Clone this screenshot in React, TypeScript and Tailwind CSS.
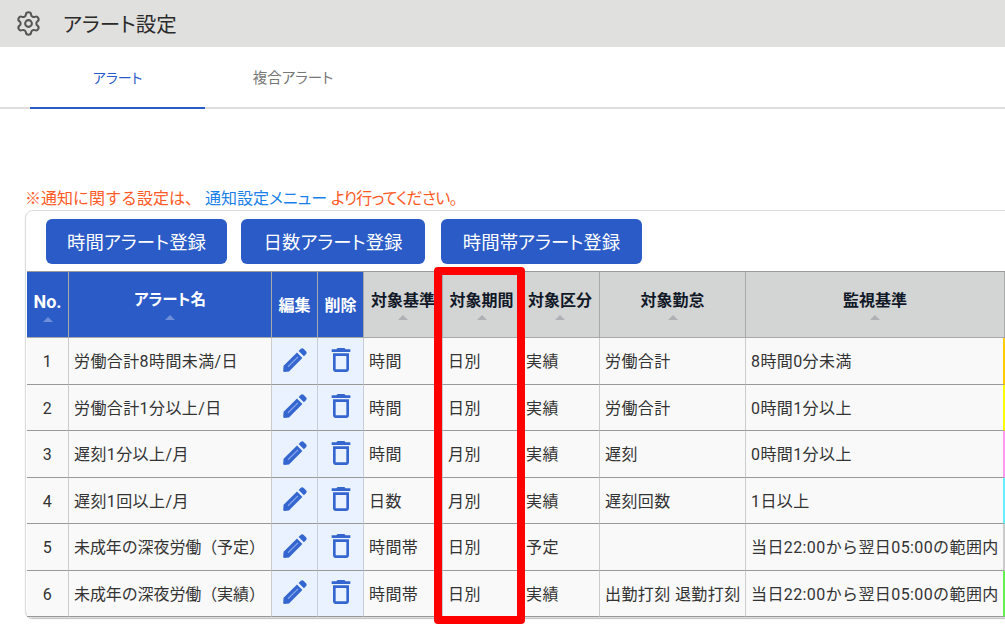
import { Settings } from "lucide-react";
import { MdOutlineDelete } from "react-icons/md";

const rows = [
  ["1", "労働合計8時間未満/日", "時間", "日別", "実績", "労働合計", "8時間0分未満", "border-r-[#ffcc00]"],
  ["2", "労働合計1分以上/日", "時間", "日別", "実績", "労働合計", "0時間1分以上", "border-r-[#ffff00]"],
  ["3", "遅刻1分以上/月", "時間", "月別", "実績", "遅刻", "0時間1分以上", "border-r-[#ff99ee]"],
  ["4", "遅刻1回以上/月", "日数", "月別", "実績", "遅刻回数", "1日以上", "border-r-[#66eeff]"],
  ["5", "未成年の深夜労働（予定）", "時間帯", "日別", "予定", "", "当日22:00から翌日05:00の範囲内", "border-r-[#cccccc]"],
  ["6", "未成年の深夜労働（実績）", "時間帯", "日別", "実績", "出勤打刻 退勤打刻", "当日22:00から翌日05:00の範囲内", "border-r-[#66ee55]"],
];

function Pencil() {
  return (
    <svg viewBox="0 0 24 24" className="mx-auto -mt-[2px] h-[24px] w-[24px]">
      <path d="M0.6 17.8 L14 4.6 L19.4 10 L6 23.4 L1.4 23.9 Q0.2 24 0.2 22.6 Z" fill="#3566cf" />
      <path d="M5 18.8 L15 8.9" stroke="#86a6ea" strokeWidth="1.3" fill="none" />
      <path d="M15.6 3 L17.6 1 C18.6 0 19.8 0 20.7 0.9 L23 3.2 C23.9 4.1 23.9 5.3 22.9 6.3 L20.9 8.3 Z" fill="#3566cf" />
    </svg>
  );
}

function Caret({ light }: { light?: boolean }) {
  return (
    <div
      className={
        "mx-auto mt-[2px] h-0 w-0 border-x-[5px] border-b-[5px] border-x-transparent " +
        (light ? "border-b-[#6f8fd8]" : "border-b-[#aeb0b3]")
      }
    />
  );
}

function BlueHead({ label, caret, className = "" }: { label: string; caret?: boolean; className?: string }) {
  return (
    <th className={"border-r border-b border-[#a9a9a9] bg-[#2a5bc7] p-0 text-center align-middle font-bold text-white " + className}>
      <div className={caret ? "mt-0" : "mt-[2px]"}>{label}</div>
      {caret && <Caret light />}
    </th>
  );
}

function GrayHead({ label }: { label: string }) {
  return (
    <th className="border-r border-b border-r-[#a9a9a9] border-b-[#a9a9a9] bg-[#d3d4d4] p-0 text-center align-middle font-bold text-[#111827]">
      <div className="mt-0">{label}</div>
      <Caret />
    </th>
  );
}

const cell = "border-r border-b border-r-[#cccccc] border-b-[#999] pt-[3px] ";

export default function App() {
  return (
    <div className="relative h-[634px] w-[1005px] overflow-hidden bg-white font-['Roboto','Noto_Sans_CJK_JP',sans-serif] text-[#333]">
      <header className="flex h-[47px] items-center bg-[#e0e0de] pl-[15px]">
        <Settings size={27} strokeWidth={1.8} className="text-[#555555]" />
        <h1 className="ml-[21px] pt-[3px] text-[20.5px] font-normal text-[#2b2b2b] [font-feature-settings:'palt']">アラート設定</h1>
      </header>

      <nav className="flex h-[62px] border-b-2 border-[#dfdddd] pl-[30px] [font-feature-settings:'palt']">
        <div className="-mb-[2px] flex h-[62px] w-[175px] items-center justify-center border-b-2 border-[#2a5bc7] pt-[2px] text-[14px] text-[#2a5bc7]">
          アラート
        </div>
        <div className="flex h-[60px] w-[176px] items-center justify-center pt-[4px] text-[14.5px] text-[#777]">
          複合アラート
        </div>
      </nav>

      <p className="mt-[79px] ml-[25px] h-[22px] text-[16px] leading-[22px] text-[#ff5a26]">
        ※通知に関する設定は、 <span className="text-[#1a7fe8] [font-feature-settings:'palt']">通知設定メニュー</span>{" "}
        <span className="tracking-[-0.8px] [font-feature-settings:'palt']">より行ってください。</span>
      </p>

      <section className="ml-[25px] h-[408px] w-[990px] rounded-lg border border-[#dddddd] pt-[8px] shadow-[0_1px_1px_rgba(0,0,0,0.25)]">
        <div className="flex h-[45px] gap-[14px] pl-[20px] text-[18.4px] text-white [font-feature-settings:'palt']">
          <button className="h-[45px] w-[181px] rounded-md bg-[#2a5bc7] pt-[2px]">時間アラート登録</button>
          <button className="h-[45px] w-[184px] rounded-md bg-[#2a5bc7] pt-[2px]">日数アラート登録</button>
          <button className="ml-[2px] h-[45px] w-[201px] rounded-md bg-[#2a5bc7] pt-[2px]">時間帯アラート登録</button>
        </div>

        <table className="mt-[7px] ml-[1px] w-[978px] table-fixed border-separate border-spacing-0 border-t border-[#999] text-[16px]">
          <colgroup>
            <col className="w-[42px]" />
            <col className="w-[203px]" />
            <col className="w-[46px]" />
            <col className="w-[46px]" />
            <col className="w-[79px]" />
            <col className="w-[78px]" />
            <col className="w-[79px]" />
            <col className="w-[146px]" />
            <col className="w-[259px]" />
          </colgroup>
          <thead>
            <tr className="h-[66px]">
              <BlueHead label="No." caret className="text-[18px]" />
              <BlueHead label="アラート名" caret className="text-[15.5px] [font-feature-settings:'palt']" />
              <BlueHead label="編集" />
              <BlueHead label="削除" />
              <GrayHead label="対象基準" />
              <GrayHead label="対象期間" />
              <GrayHead label="対象区分" />
              <GrayHead label="対象勤怠" />
              <GrayHead label="監視基準" />
            </tr>
          </thead>
          <tbody>
            {rows.map((r) => (
              <tr key={r[0]} className="h-[46.5px] bg-[#f9f9f9] text-[16px] tracking-[0.4px] whitespace-nowrap">
                <td className={cell + "pr-0 pb-0 pl-0 text-center"}>{r[0]}</td>
                <td className={cell + "pl-[5px] " + (r[0] > "4" ? "tracking-[-0.1px]" : "")}>{r[1]}</td>
                <td className="border-r border-b border-r-[#c6ced9] border-b-[#999] bg-[#e9f2fe] p-0">
                  <Pencil />
                </td>
                <td className="border-r border-b border-r-[#c6ced9] border-b-[#999] bg-[#e9f2fe] p-0">
                  <MdOutlineDelete size={32} className="mx-auto -mt-[2px] text-[#3566cf]" />
                </td>
                <td className={cell + "pl-[5px]"}>{r[2]}</td>
                <td className={cell + "pl-[5px]"}>{r[3]}</td>
                <td className={cell + "pl-[5px]"}>{r[4]}</td>
                <td className={cell + "pl-[5px]"}>{r[5]}</td>
                <td className={"border-r-2 border-b border-b-[#999] pt-[3px] pl-[5px] " + r[7]}>{r[6]}</td>
              </tr>
            ))}
          </tbody>
        </table>
      </section>

      <div className="absolute top-[267px] left-[434px] h-[357px] w-[91px] rounded-[4px] border-[8px] border-[#ff0000]" />
    </div>
  );
}
